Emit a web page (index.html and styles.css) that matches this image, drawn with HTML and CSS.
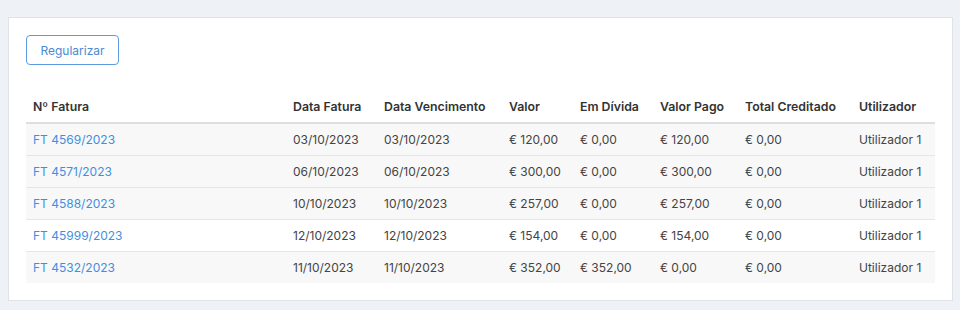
FILE: index.html
```html
<!DOCTYPE html>
<html lang="pt">
<head>
<meta charset="utf-8">
<link rel="stylesheet" href="styles.css">
</head>
<body>
<div class="card">
  <button class="btn">Regularizar</button>
  <table class="grid">
    <colgroup>
      <col class="c1"><col class="c2"><col class="c3"><col class="c4"><col class="c5"><col class="c6"><col class="c7"><col class="c8">
    </colgroup>
    <thead>
      <tr><th>Nº Fatura</th><th>Data Fatura</th><th>Data Vencimento</th><th>Valor</th><th>Em Dívida</th><th>Valor Pago</th><th>Total Creditado</th><th>Utilizador</th></tr>
    </thead>
    <tbody>
      <tr class="alt"><td><a href="#">FT 4569/2023</a></td><td>03/10/2023</td><td>03/10/2023</td><td>€ 120,00</td><td>€ 0,00</td><td>€ 120,00</td><td>€ 0,00</td><td>Utilizador 1</td></tr>
      <tr class="alt"><td><a href="#">FT 4571/2023</a></td><td>06/10/2023</td><td>06/10/2023</td><td>€ 300,00</td><td>€ 0,00</td><td>€ 300,00</td><td>€ 0,00</td><td>Utilizador 1</td></tr>
      <tr class="alt"><td><a href="#">FT 4588/2023</a></td><td>10/10/2023</td><td>10/10/2023</td><td>€ 257,00</td><td>€ 0,00</td><td>€ 257,00</td><td>€ 0,00</td><td>Utilizador 1</td></tr>
      <tr><td><a href="#">FT 45999/2023</a></td><td>12/10/2023</td><td>12/10/2023</td><td>€ 154,00</td><td>€ 0,00</td><td>€ 154,00</td><td>€ 0,00</td><td>Utilizador 1</td></tr>
      <tr class="alt"><td><a href="#">FT 4532/2023</a></td><td>11/10/2023</td><td>11/10/2023</td><td>€ 352,00</td><td>€ 352,00</td><td>€ 0,00</td><td>€ 0,00</td><td>Utilizador 1</td></tr>
    </tbody>
  </table>
</div>
</body>
</html>
```
FILE: styles.css
```css
html, body { margin: 0; }
body {
  background: #eef1f6;
  padding: 17px 7px 10px 8px;
  font-family: Inter, "Noto Sans", sans-serif;
  font-size: 12px;
  color: #444;
}
.card {
  background: #fff;
  border: 1px solid #dfe2e7;
  padding: 17px 16px 17px 17px;
  display: flex;
  flex-direction: column;
  align-items: flex-start;
  gap: 26px;
}
.btn {
  width: 93px;
  height: 30px;
  border: 1px solid #5d9be0;
  border-radius: 4px;
  background: #fff;
  color: #4a8ad6;
  font-family: inherit;
  font-size: 12px;
  padding: 0;
}
.grid {
  border-collapse: collapse;
  table-layout: fixed;
  width: 909px;
}
.c1 { width: 260px; } .c2 { width: 91px; } .c3 { width: 125px; } .c4 { width: 71px; }
.c5 { width: 80px; } .c6 { width: 85px; } .c7 { width: 114px; } .c8 { width: 83px; }
th {
  text-align: left;
  font-weight: 600;
  font-size: 12.3px;
  color: #333;
  height: 31px;
  padding: 0 7px;
  border-bottom: 2px solid #dedede;
  white-space: nowrap;
}
td {
  height: 31px;
  padding: 0 7px;
  border-top: 1px solid #e6e6e6;
  white-space: nowrap;
}
tbody tr:first-child td { border-top: 0; }
tr.alt td { background: #f8f8f8; }
a { color: #3f8fdf; text-decoration: none; }
```
